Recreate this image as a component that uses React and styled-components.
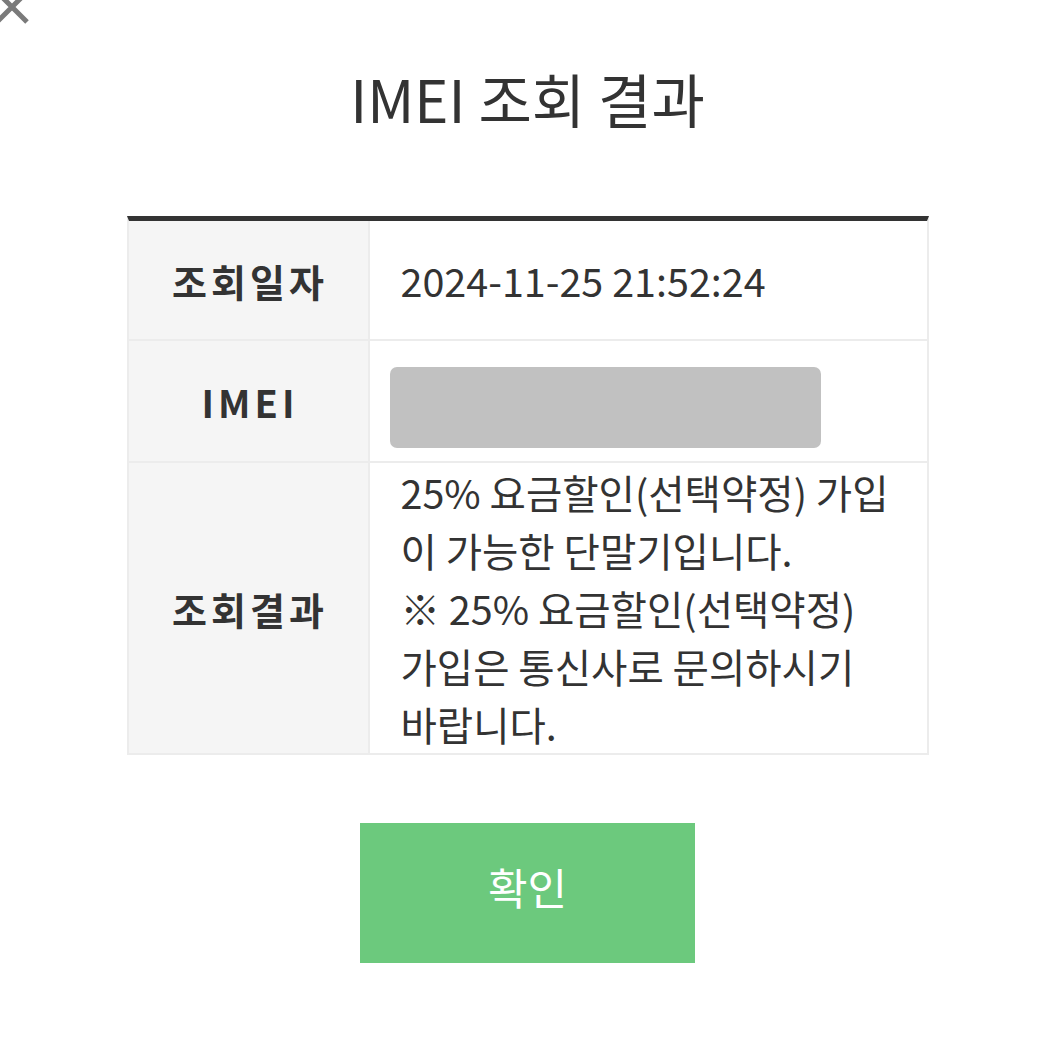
import React from 'react'
import styled, { createGlobalStyle } from 'styled-components'

const GlobalStyle = createGlobalStyle`
    body {
        margin: 0;
        background: #ffffff;
        font-family: 'Noto Sans CJK KR', 'Noto Sans', sans-serif;
        color: #333333;
    }
`;

const rows = [
    { label: '조회일자', value: '2024-11-25 21:52:24' },
    { label: 'IMEI', masked: true },
    {
        label: '조회결과',
        value: '25% 요금할인(선택약정) 가입이 가능한 단말기입니다.\n※ 25% 요금할인(선택약정) 가입은 통신사로 문의하시기 바랍니다.',
        tall: true,
    },
]

const App = () => {
  return (
    <>
        <GlobalStyle />
        <Page>
            <CloseBtn aria-label='close'>
                <svg width='40' height='40' viewBox='0 0 40 40'>
                    <path d='M-5 -10 L27 22 M29 -10 L-3 22' stroke='#7a7a7a' strokeWidth='5' />
                </svg>
            </CloseBtn>
            <Title>{'IMEI 조회 결과'}</Title>
            <Table>
                {rows.map((row) => (
                    <React.Fragment key={row.label}>
                        <LabelCell>{row.label}</LabelCell>
                        <ValueCell masked={row.masked}>
                            {row.masked ? <Masked /> : <ValueText>{row.value}</ValueText>}
                        </ValueCell>
                    </React.Fragment>
                ))}
            </Table>
            <ConfirmBtn>{'확인'}</ConfirmBtn>
        </Page>
    </>
  )
}

export default App

const Page = styled.div`
    position: relative;
    width: 1055px;
    height: 1055px;
    display: flex;
    flex-direction: column;
    align-items: center;
    overflow: hidden;
`;

const CloseBtn = styled.button`
    position: absolute;
    top: 0;
    left: 0;
    width: 40px;
    height: 40px;
    padding: 0;
    border: 0;
    background: transparent;
    svg { display: block; overflow: visible; }
`;

const Title = styled.h1`
    margin: 63px 0 0 0;
    height: 70px;
    font-size: 58px;
    line-height: 70px;
    font-weight: 400;
    color: #333333;
    white-space: nowrap;
`;

const Table = styled.div`
    margin-top: 83px;
    width: 798px;
    display: grid;
    grid-template-columns: 241px minmax(0, 1fr);
    border-top: 5px solid #333333;
    border-left: 2px solid #ececec;
    border-right: 2px solid #ececec;
`;

const LabelCell = styled.div`
    display: flex;
    align-items: center;
    justify-content: center;
    padding-left: 4px;
    background: #f5f5f5;
    border-right: 2px solid #ececec;
    border-bottom: 2px solid #ececec;
    font-size: 38px;
    font-weight: 700;
    letter-spacing: 4px;
    color: #333333;
`;

const ValueCell = styled.div`
    display: flex;
    align-items: center;
    min-height: ${(props) => props.masked ? '120px' : '118px'};
    padding-left: ${(props) => props.masked ? '20px' : '31px'};
    border-bottom: 2px solid #ececec;
    background: #ffffff;
`;

const ValueText = styled.div`
    width: 495px;
    font-size: 39.5px;
    line-height: 58px;
    color: #333333;
    white-space: pre-line;
    word-break: break-all;
`;

const Masked = styled.div`
    margin-top: 13px;
    width: 431px;
    height: 81px;
    border-radius: 7px;
    background: #c1c1c1;
`;

const ConfirmBtn = styled.button`
    margin-top: 68px;
    width: 335px;
    height: 140px;
    padding: 0 0 14px 0;
    border: 0;
    background: #6cc97d;
    color: #ffffff;
    font-family: 'Noto Sans CJK KR', 'Noto Sans', sans-serif;
    font-size: 43px;
    font-weight: 400;
`;
